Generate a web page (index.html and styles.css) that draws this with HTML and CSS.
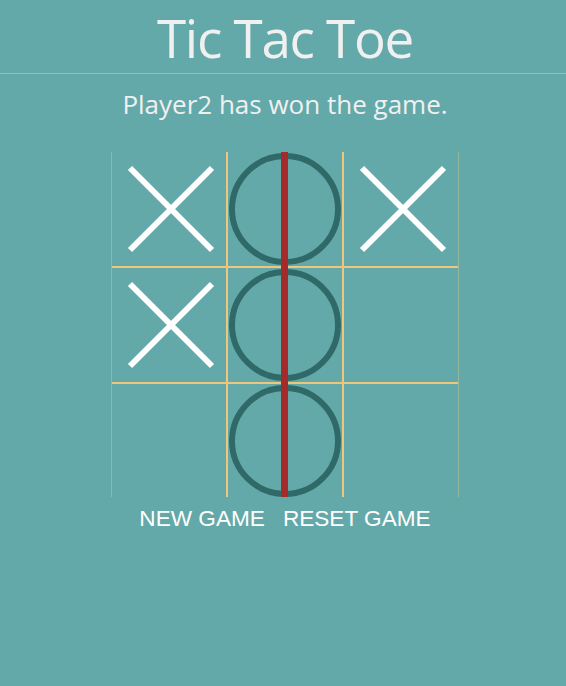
FILE: index.html
```html
<!DOCTYPE html>
<html>
<head>
<meta charset="utf-8">
<link rel="stylesheet" href="styles.css">
</head>
<body>
<header class="header"><h1 class="title">Tic Tac Toe</h1></header>
<p class="status">Player2 has won the game.</p>
<div class="board">
  <div class="grid">
    <div class="cell"><svg class="mark" viewBox="0 0 114 114"><path d="M18 16 L100 98 M100 16 L18 98" class="x"/></svg></div>
    <div class="cell"><svg class="mark" viewBox="0 0 114 114"><circle cx="57" cy="57" r="53" class="o"/></svg></div>
    <div class="cell"><svg class="mark" viewBox="0 0 114 114"><path d="M18 16 L100 98 M100 16 L18 98" class="x"/></svg></div>
    <div class="cell"><svg class="mark" viewBox="0 0 114 114"><path d="M18 16 L100 98 M100 16 L18 98" class="x"/></svg></div>
    <div class="cell"><svg class="mark" viewBox="0 0 114 114"><circle cx="57" cy="57" r="53" class="o"/></svg></div>
    <div class="cell"></div>
    <div class="cell"></div>
    <div class="cell"><svg class="mark" viewBox="0 0 114 114"><circle cx="57" cy="57" r="53" class="o"/></svg></div>
    <div class="cell"></div>
  </div>
  <div class="win-line"></div>
</div>
<div class="actions">
  <button class="btn">NEW GAME</button>
  <button class="btn">RESET GAME</button>
</div>
</body>
</html>
```
FILE: styles.css
```css
html, body {
  margin: 0;
  padding: 0;
  background: #64a9a9;
  height: 100%;
}
body {
  font-family: "Open Sans", sans-serif;
  color: #f0f0f0;
  padding-left: 4px;
  box-sizing: border-box;
}
.header {
  border-bottom: 1px solid #8fc2c2;
  height: 73px;
  margin-left: -4px;
  padding-left: 4px;
  display: flex;
  justify-content: center;
  align-items: center;
  overflow: visible;
}
.title {
  margin: 0;
  font-weight: 400;
  font-size: 53px;
  line-height: 73px;
  letter-spacing: -1.3px;
  padding-top: 2px;
}
.status {
  margin: 13px 0 0;
  text-align: center;
  font-size: 26px;
  font-weight: 400;
  line-height: 34px;
}
.board {
  position: relative;
  width: 346px;
  margin: 31px auto 0;
  border-left: 1px solid #93b99a;
  border-right: 1px solid #93b99a;
}
.grid {
  display: grid;
  grid-template-columns: 114px 114px 114px;
  grid-template-rows: 114px 114px 113px;
  gap: 2px;
  background: #efc67c;
}
.cell {
  background: #64a9a9;
  display: flex;
  align-items: center;
  justify-content: center;
}
.mark {
  width: 114px;
  height: 114px;
  display: block;
}
.x {
  stroke: #ffffff;
  stroke-width: 6;
  fill: none;
}
.o {
  stroke: #2f6a69;
  stroke-width: 6;
  fill: none;
}
.win-line {
  position: absolute;
  left: 169px;
  top: 0;
  bottom: 0;
  width: 7px;
  background: #a52a2a;
}
.actions {
  display: flex;
  justify-content: center;
  gap: 18px;
  margin-top: 7px;
}
.btn {
  background: none;
  border: none;
  padding: 0;
  color: #ffffff;
  font-family: "Liberation Sans", Arial, sans-serif;
  font-size: 22.6px;
  line-height: 30px;
  cursor: pointer;
}
```
